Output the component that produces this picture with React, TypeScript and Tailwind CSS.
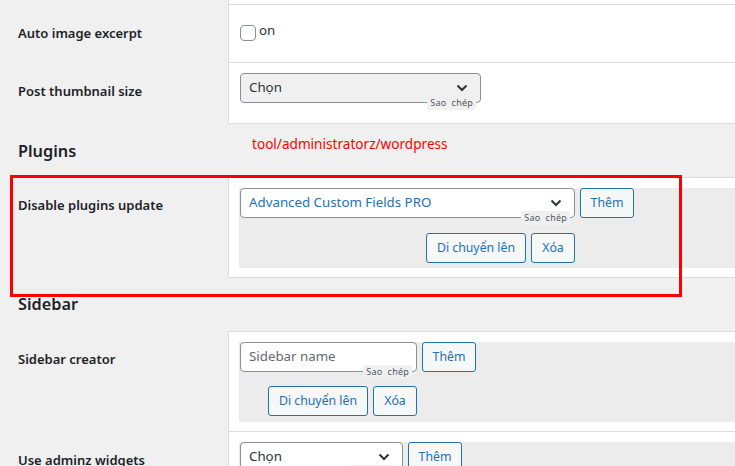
import type { ReactNode } from "react";

const font = { fontFamily: '"Noto Sans", "Open Sans", sans-serif' };

function Tip() {
  return (
    <span className="absolute right-[4px] top-[calc(100%-6px)] bg-[#f0f0f1] text-[#50575e] text-[9px] leading-[14px] px-[3px] rounded-[3px] tracking-wide whitespace-nowrap">
      Sao&nbsp;&nbsp;chép
    </span>
  );
}

function Chevron() {
  return (
    <svg className="w-[12px] h-[8px]" viewBox="0 0 12 8" fill="none" stroke="#2c3338" strokeWidth={2}>
      <path d="M1.5 1.5l4.5 4.5 4.5-4.5" />
    </svg>
  );
}

function Select({ text, w, blue, gray }: { text: string; w: string; blue?: boolean; gray?: boolean }) {
  return (
    <div
      className={`relative ${w} h-[30px] border border-[#8c8f94] rounded-[4px] flex items-center justify-between pl-[8px] pr-[12px] text-[13.3px] ${
        blue ? "text-[#2271b1]" : "text-[#2c3338]"
      } ${gray ? "bg-[#f0f0f1]" : "bg-white"}`}
    >
      <span>{text}</span>
      <Chevron />
      <Tip />
    </div>
  );
}

function Btn({ children, w }: { children: ReactNode; w: string }) {
  return (
    <button className={`${w} h-[30px] border border-[#2271b1] text-[#2271b1] bg-[#f6f7f7] rounded-[3px] text-[12.3px] flex items-center justify-center`}>
      {children}
    </button>
  );
}

function Label({ children }: { children: ReactNode }) {
  return (
    <div className="w-[228px] shrink-0 pl-[18px] pt-[19px] text-[13px] font-semibold text-[#1d2327] leading-[18px]">
      {children}
    </div>
  );
}

export default function App() {
  return (
    <div className="relative h-screen bg-[#f0f0f1] overflow-hidden" style={font}>
      {/* General rows */}
      <div className="flex">
        <div className="w-[228px] shrink-0" />
        <div className="flex-1 h-[5px] bg-white border-l border-b border-[#dcdcde]" />
      </div>
      <div className="flex">
        <Label>Auto image excerpt</Label>
        <div className="flex-1 h-[58px] bg-white border-l border-b border-[#dcdcde] pl-[11px] pt-[20px]">
          <label className="flex items-center gap-[3px] text-[13.3px] text-[#2c3338]">
            <span className="w-[16px] h-[16px] border border-[#8c8f94] rounded-[4px] bg-white" />
            <span className="-mt-[4px]">on</span>
          </label>
        </div>
      </div>
      <div className="flex">
        <Label>Post thumbnail size</Label>
        <div className="flex-1 h-[61px] bg-white border-l border-b border-[#dcdcde] pl-[11px] pt-[10px]">
          <Select text="Chọn" w="w-[241px]" gray />
        </div>
      </div>

      {/* Plugins */}
      <div className="h-[53px] flex items-center pl-[18px]">
        <h2 className="w-[234px] text-[16.3px] font-semibold text-[#1d2327] mt-[2px]">Plugins</h2>
        <span className="text-[13.6px] text-[#ff0000] -mt-[12px]">tool/administratorz/wordpress</span>
      </div>
      <div className="flex">
        <Label>Disable plugins update</Label>
        <div className="flex-1 h-[101px] bg-white border-l border-t border-b border-[#dcdcde] pl-[10px] pt-[10px]">
          <div className="bg-[#ececec] h-[80px]">
            <div className="flex gap-[5px] pl-[1px]">
              <Select text="Advanced Custom Fields PRO" w="w-[335px]" blue />
              <Btn w="w-[54px]">Thêm</Btn>
            </div>
            <div className="w-[336px] flex justify-end gap-[5px] mt-[15px]">
              <Btn w="w-[100px]">Di chuyển lên</Btn>
              <Btn w="w-[44px]">Xóa</Btn>
            </div>
          </div>
        </div>
      </div>

      {/* Sidebar */}
      <div className="h-[53px] flex items-center pl-[18px]">
        <h2 className="text-[16.3px] font-semibold text-[#1d2327]">Sidebar</h2>
      </div>
      <div className="flex">
        <Label>Sidebar creator</Label>
        <div className="flex-1 h-[101px] bg-white border-l border-t border-b border-[#dcdcde] pl-[10px] pt-[10px]">
          <div className="bg-[#ececec] h-[80px]">
            <div className="flex gap-[5px] pl-[1px]">
              <div className="relative w-[177px] h-[30px] border border-[#8c8f94] rounded-[4px] bg-white flex items-center pl-[8px] text-[13.3px] text-[#646970]">
                Sidebar name
                <Tip />
              </div>
              <Btn w="w-[54px]">Thêm</Btn>
            </div>
            <div className="w-[178px] flex justify-end gap-[5px] mt-[14px]">
              <Btn w="w-[100px]">Di chuyển lên</Btn>
              <Btn w="w-[44px]">Xóa</Btn>
            </div>
          </div>
        </div>
      </div>
      <div className="flex">
        <Label>Use adminz widgets</Label>
        <div className="flex-1 h-[80px] bg-white border-l border-[#dcdcde] pl-[10px] pt-[10px]">
          <div className="bg-[#ececec] h-[60px]">
            <div className="flex gap-[5px] pl-[1px]">
              <Select text="Chọn" w="w-[163px]" />
              <Btn w="w-[54px]">Thêm</Btn>
            </div>
          </div>
        </div>
      </div>

      {/* annotation box */}
      <div className="absolute left-[10px] top-[175px] w-[672px] h-[122px] border-[3px] border-[#ff0000]" />
    </div>
  );
}
